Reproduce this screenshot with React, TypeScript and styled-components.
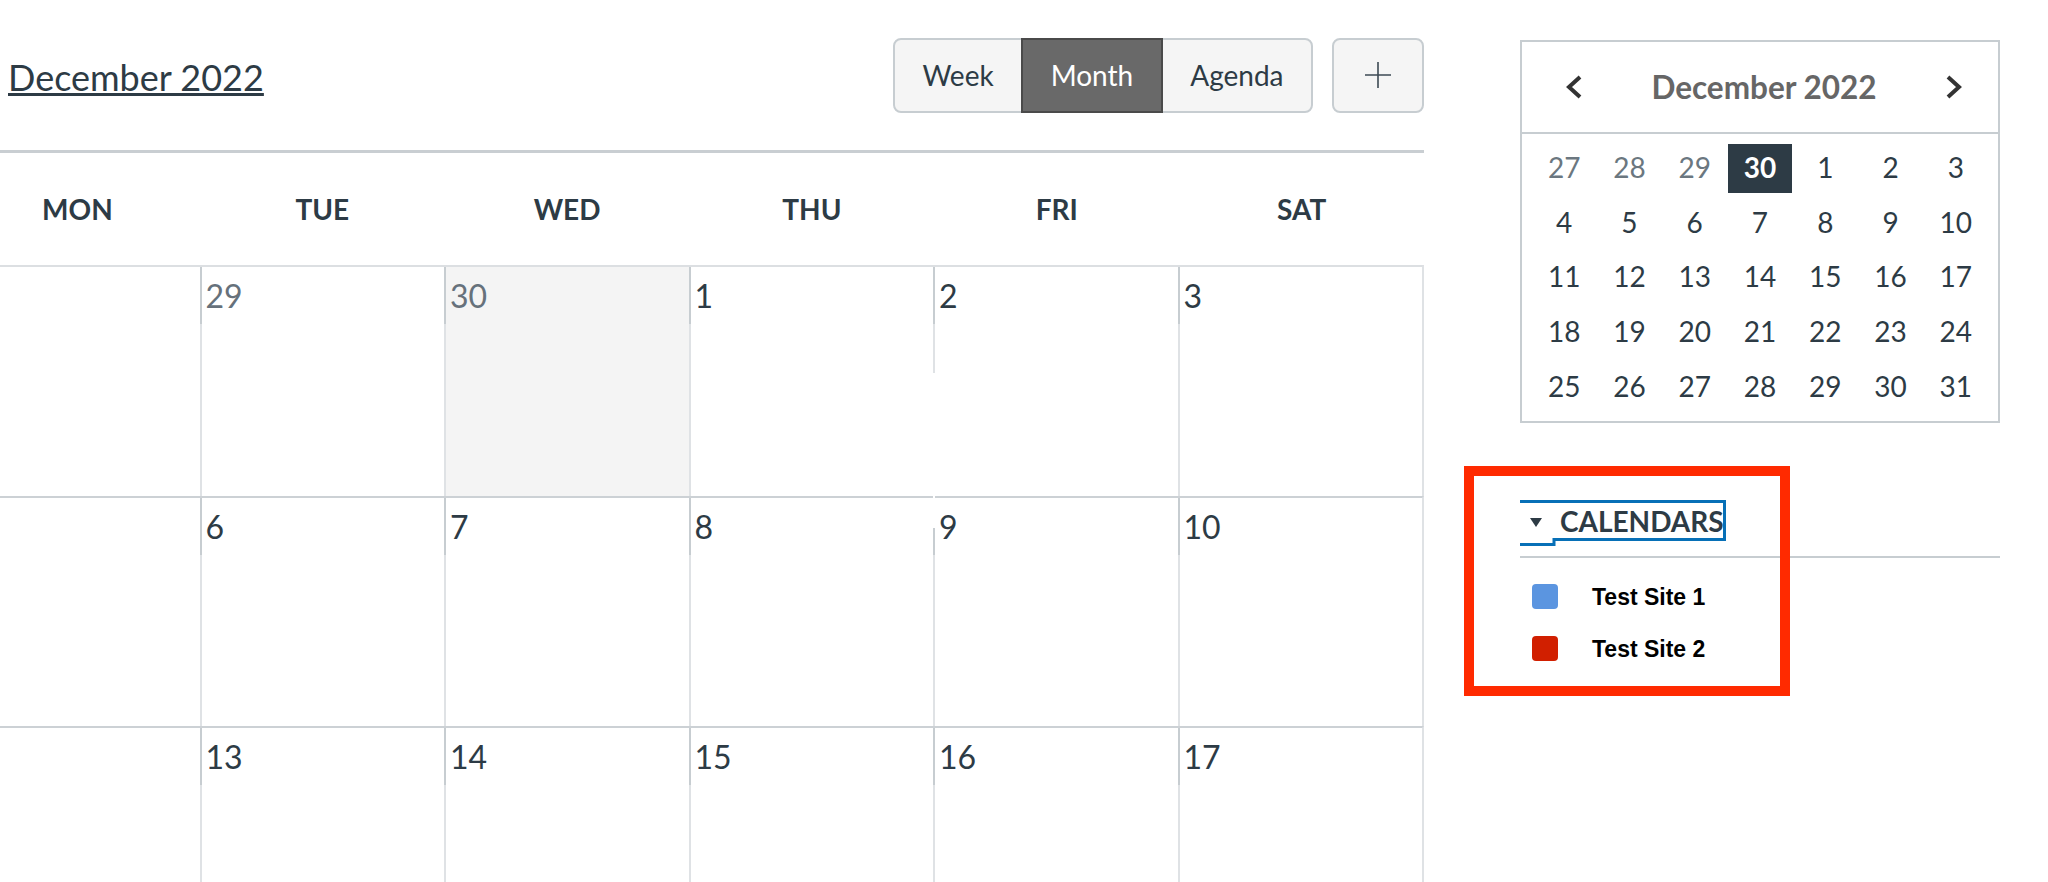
import React from "react";
import styled, { createGlobalStyle, css } from "styled-components";

const GlobalStyle = createGlobalStyle`
  html, body {
    margin: 0;
    padding: 0;
    background: #fff;
  }
  body {
    font-family: Lato, "Noto Sans", sans-serif;
    color: #2d3b45;
    overflow: hidden;
  }
  * {
    box-sizing: border-box;
  }
`;

const Page = styled.div`
  display: flex;
  gap: 96px;
  width: 2048px;
  height: 882px;
  overflow: hidden;
`;

/* ---------- main calendar ---------- */

const Main = styled.main`
  flex: none;
  width: 1424px;
`;

const Toolbar = styled.header`
  height: 153px;
  display: flex;
  align-items: center;
  justify-content: space-between;
  padding-left: 8px;
  border-bottom: 3px solid #c9ced2;
`;

const MonthTitle = styled.h1`
  margin: 0;
  padding-top: 6px;
  font-size: 36px;
  font-weight: 400;
  line-height: 1.2;
  color: #2d3b45;
  text-decoration: underline;
  text-decoration-thickness: 3px;
  text-underline-offset: 2px;
`;

const ToolbarActions = styled.div`
  display: flex;
  gap: 19px;
`;

const ViewSwitch = styled.div`
  display: flex;
  height: 75px;
`;

const ViewButton = styled.button<{ $active?: boolean }>`
  position: relative;
  height: 100%;
  padding: 0 27.5px;
  margin-left: -2px;
  border: 2px solid #c7cdd1;
  background: #f5f5f5;
  color: #2d3b45;
  font-family: Lato, sans-serif;
  font-size: 28px;
  &:first-child {
    margin-left: 0;
    border-radius: 8px 0 0 8px;
  }
  &:last-child {
    border-radius: 0 8px 8px 0;
  }
  ${(p) =>
    p.$active &&
    css`
      z-index: 1;
      background: #696969;
      border-color: #4a4a4a;
      color: #fff;
    `}
`;

const AddButton = styled.button`
  width: 92px;
  height: 75px;
  display: flex;
  align-items: center;
  justify-content: center;
  border: 2px solid #c7cdd1;
  border-radius: 8px;
  background: #f5f5f5;
  color: #3d4a54;
`;

const Calendar = styled.div`
  margin-left: -45px;
  width: 1469px;
`;

const WeekdayRow = styled.div`
  display: grid;
  grid-template-columns: repeat(6, 1fr);
  align-items: center;
  height: 112px;
`;

const Weekday = styled.div`
  text-align: center;
  font-size: 28px;
  font-weight: 700;
  color: #2d3b45;
`;

const WeekRow = styled.div<{ $first?: boolean }>`
  display: grid;
  grid-template-columns: repeat(6, 1fr);
  height: 230.5px;
  border-top: 2px solid ${(p) => (p.$first ? "#dcdfe2" : "#ccd1d5")};
  border-right: 2px solid #dfe2e5;
`;

const DayCell = styled.div<{ $today?: boolean; $gapTop?: number; $gapHeight?: number }>`
  position: relative;
  border-left: 2px solid #dfe2e5;
  background: ${(p) => (p.$today ? "#f4f4f4" : "#fff")};
  ${(p) =>
    p.$gapHeight !== undefined &&
    css`
      &::after {
        content: "";
        position: absolute;
        left: -2px;
        top: ${p.$gapTop}px;
        width: 2px;
        height: ${p.$gapHeight}px;
        background: #fff;
      }
    `}
`;

const DayTop = styled.div<{ $other?: boolean }>`
  height: 57px;
  margin-left: -2px;
  padding: 10px 0 0 4px;
  border-left: 2px solid #c7cdd1;
  font-size: 32px;
  line-height: 1.2;
  color: ${(p) => (p.$other ? "#66717b" : "#2d3b45")};
`;

/* ---------- sidebar ---------- */

const Sidebar = styled.aside`
  flex: none;
  width: 480px;
  padding-top: 40px;
`;

const MiniCal = styled.section`
  border: 2px solid #c7cdd1;
`;

const MiniHeader = styled.div`
  height: 92px;
  display: grid;
  grid-template-columns: 1fr auto 1fr;
  align-items: center;
  padding: 0 35px 0 43px;
  border-bottom: 2px solid #c7cdd1;
`;

const Chevron = styled.svg<{ $end?: boolean }>`
  justify-self: ${(p) => (p.$end ? "end" : "start")};
`;

const MiniTitle = styled.div`
  font-size: 31.5px;
  font-weight: 700;
  color: #666;
`;

const MiniGrid = styled.div`
  display: grid;
  grid-template-columns: repeat(7, 1fr);
  grid-auto-rows: 49px;
  row-gap: 5.7px;
  padding: 10px 9.5px 9px;
`;

const MiniDay = styled.div<{ $other?: boolean; $today?: boolean }>`
  display: flex;
  align-items: center;
  justify-content: center;
  padding-bottom: 3px;
  font-size: 28px;
  color: ${(p) => (p.$other ? "#6b7780" : "#2d3b45")};
  ${(p) =>
    p.$today &&
    css`
      justify-self: center;
      width: 64px;
      background: #2d3b45;
      color: #fff;
      font-weight: 700;
    `}
`;

const CalendarsSection = styled.section`
  position: relative;
  margin-top: 77px;
`;

const SectionHeader = styled.div`
  padding-bottom: 16px;
  border-bottom: 2px solid #c7cdd1;
`;

const Toggle = styled.button`
  position: relative;
  height: 40px;
  display: flex;
  align-items: center;
  gap: 18px;
  padding: 2px 0 0 10px;
  border: none;
  background: none;
  font-family: Lato, sans-serif;
  font-size: 28px;
  font-weight: 700;
  color: #2d3b45;
`;

const Caret = styled.span`
  width: 0;
  height: 0;
  margin-top: 4px;
  border-left: 6px solid transparent;
  border-right: 6px solid transparent;
  border-top: 9px solid #2d3b45;
`;

const FocusRing = styled.svg`
  position: absolute;
  left: 0;
  top: 0;
  overflow: visible;
`;

const CalendarList = styled.ul`
  list-style: none;
  margin: 0;
  padding: 26px 0 0;
  display: flex;
  flex-direction: column;
  gap: 27px;
`;

const CalendarItem = styled.li`
  display: flex;
  align-items: center;
  height: 25px;
  gap: 34px;
  padding-left: 12px;
  font-family: "Liberation Sans", Arial, sans-serif;
  font-size: 23px;
  font-weight: 700;
  color: #000;
`;

const ItemLabel = styled.span`
  padding-top: 3px;
`;

const Swatch = styled.span<{ $color: string }>`
  width: 26px;
  height: 25px;
  border-radius: 4px;
  background: ${(p) => p.$color};
`;

const Highlight = styled.div`
  position: absolute;
  left: -56px;
  top: -34px;
  width: 326px;
  height: 230px;
  border: 10px solid #ff2a00;
  pointer-events: none;
`;

type Day = { d: number | null; other?: boolean; today?: boolean; gap?: [number, number] };

const weeks: Day[][] = [
  [
    { d: null },
    { d: 29, other: true },
    { d: 30, other: true, today: true },
    { d: 1 },
    { d: 2, gap: [106, 125] },
    { d: 3 },
  ],
  [{ d: null }, { d: 6 }, { d: 7 }, { d: 8 }, { d: 9, gap: [0, 30] }, { d: 10 }],
  [{ d: null }, { d: 13 }, { d: 14 }, { d: 15 }, { d: 16 }, { d: 17 }],
];

const weekdays = ["MON", "TUE", "WED", "THU", "FRI", "SAT"];

const miniDays: Day[] = [
  { d: 27, other: true },
  { d: 28, other: true },
  { d: 29, other: true },
  { d: 30, today: true },
  ...Array.from({ length: 31 }, (_, i) => ({ d: i + 1 })),
];

const calendars = [
  { name: "Test Site 1", color: "#5b95e0" },
  { name: "Test Site 2", color: "#d11f00" },
];

export default function App() {
  return (
    <>
      <GlobalStyle />
      <Page>
        <Main>
          <Toolbar>
            <MonthTitle>December 2022</MonthTitle>
            <ToolbarActions>
              <ViewSwitch>
                <ViewButton>Week</ViewButton>
                <ViewButton $active>Month</ViewButton>
                <ViewButton>Agenda</ViewButton>
              </ViewSwitch>
              <AddButton aria-label="Add event">
                <svg width="26" height="26" viewBox="0 0 26 26">
                  <path d="M13 0v26M0 13h26" stroke="currentColor" strokeWidth="1.6" />
                </svg>
              </AddButton>
            </ToolbarActions>
          </Toolbar>

          <Calendar>
            <WeekdayRow>
              {weekdays.map((w) => (
                <Weekday key={w}>{w}</Weekday>
              ))}
            </WeekdayRow>
            {weeks.map((week, i) => (
              <WeekRow key={i} $first={i === 0}>
                {week.map((day, j) => (
                  <DayCell
                    key={j}
                    $today={day.today}
                    $gapTop={day.gap?.[0]}
                    $gapHeight={day.gap?.[1]}
                  >
                    <DayTop $other={day.other}>{day.d}</DayTop>
                  </DayCell>
                ))}
              </WeekRow>
            ))}
          </Calendar>
        </Main>

        <Sidebar>
          <MiniCal>
            <MiniHeader>
              <Chevron width="18" height="24" viewBox="0 0 18 24">
                <polyline points="15,2 4,12 15,22" fill="none" stroke="#333" strokeWidth="4" />
              </Chevron>
              <MiniTitle>December 2022</MiniTitle>
              <Chevron $end width="18" height="24" viewBox="0 0 18 24">
                <polyline points="3,2 14,12 3,22" fill="none" stroke="#333" strokeWidth="4" />
              </Chevron>
            </MiniHeader>
            <MiniGrid>
              {miniDays.map((day, i) => (
                <MiniDay key={i} $other={day.other} $today={day.today}>
                  {day.d}
                </MiniDay>
              ))}
            </MiniGrid>
          </MiniCal>

          <CalendarsSection>
            <SectionHeader>
              <Toggle>
                <Caret />
                CALENDARS
                <FocusRing width="208" height="48" viewBox="0 0 208 48">
                  <path
                    d="M0 1.5H204.5V39.5H34V44.5H0"
                    fill="none"
                    stroke="#0770b7"
                    strokeWidth="3"
                  />
                </FocusRing>
              </Toggle>
            </SectionHeader>
            <CalendarList>
              {calendars.map((c) => (
                <CalendarItem key={c.name}>
                  <Swatch $color={c.color} />
                  <ItemLabel>{c.name}</ItemLabel>
                </CalendarItem>
              ))}
            </CalendarList>
            <Highlight />
          </CalendarsSection>
        </Sidebar>
      </Page>
    </>
  );
}
